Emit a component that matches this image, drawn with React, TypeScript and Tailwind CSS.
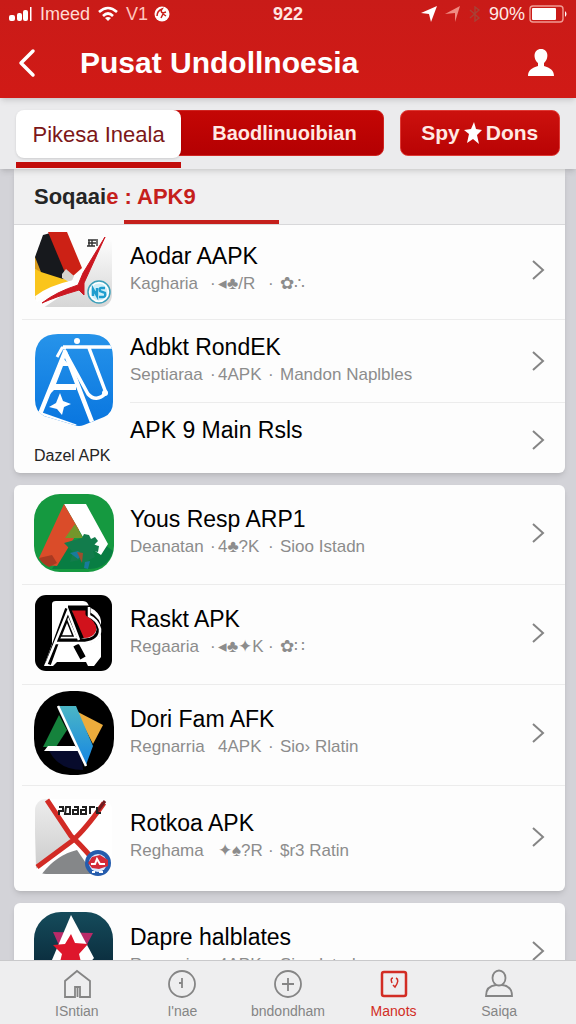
import React from "react";

type AppEntry = {
  title: string;
  publisher: string;
  format: string;
  extra: string;
  icon: React.ReactNode;
  dots: [boolean, boolean];
};

const WingIcon = () => (
  <svg viewBox="0 0 80 80" className="size-20" aria-hidden="true">
    <defs>
      <clipPath id="wing"><rect x="1" y="2" width="77" height="75" rx="12" /></clipPath>
      <linearGradient id="wingBg" x1="0" y1="0" x2="0" y2="1">
        <stop offset="0" stopColor="#fff" /><stop offset="1" stopColor="#d4d4d4" />
      </linearGradient>
    </defs>
    <g clipPath="url(#wing)">
      <rect width="80" height="80" fill="#fdfdfd" />
      <path d="M48 52 70 8 80 5V80H6Z" fill="url(#wingBg)" />
      <path d="M1 39 28 46 36 53 1 70Z" fill="#fac51c" />
      <path d="M1 27 9 5 20 2 36 47 29 49 7 42 1 36Z" fill="#17191d" />
      <path d="M1 27 7 42 1 39Z" fill="#d99b1b" />
      <path d="M14 2h19l15 36-9 8-7-1Z" fill="#cc2115" />
      <path d="m28 44 4-5 8 7-3 7-9-5Z" fill="#d6d3ce" />
      <path d="M1 70Q14 59 40 53" fill="none" stroke="#fff" strokeWidth="6" />
    </g>
    <path d="M71 7 49 43l-5 12Q22 62 8 73 21 67 45 60l5 5V53Z" fill="#cb1721" stroke="#cb1721" strokeLinejoin="round" />
    <path d="M54 10h8M55 10v6m3-6v6m-5 0h8m2-7v7m-9-3h8" stroke="#303030" strokeWidth="1.4" fill="none" />
    <circle cx="65" cy="62" r="11" fill="#fff" stroke="#3b9fb9" strokeWidth="1.5" />
    <circle cx="65" cy="62" r="8.5" fill="#cfeff8" />
    <path d="M59 66v-7l4 7v-8m8 0h-4q-2 0-1 3l5 2q1 4-2 4h-4" fill="none" stroke="#1e9dce" strokeWidth="2.4" />
  </svg>
);

const ShieldIcon = () => (
  <svg viewBox="0 0 80 96" className="h-24 w-20" aria-hidden="true">
    <defs>
      <clipPath id="shield"><path d="M24 2h31q24 0 24 24v44q0 11-9 15l-20 8q-5 2-10 0L10 84Q1 79 1 68V26Q1 2 24 2Z" /></clipPath>
      <linearGradient id="shieldBg" x1="0" y1="0" x2="0" y2="1">
        <stop stopColor="#2794ea" /><stop offset="1" stopColor="#0875df" />
      </linearGradient>
    </defs>
    <g clipPath="url(#shield)">
      <path d="M0 0h80v96H0Z" fill="url(#shieldBg)" />
      <path d="M6 82 31 20l27 70" fill="none" stroke="#fff" strokeWidth="4.5" strokeLinejoin="round" />
      <path d="M13 65 29 26l7 8H29l-7 18h20v6H20Z" fill="#fff" />
      <path d="M29 15h51M30 18l24 44q8 9 18-1L55 16" fill="none" stroke="#fff" strokeWidth="3.5" strokeLinejoin="round" />
      <path d="M32 16h-4l-5 9" fill="none" stroke="#fff" strokeWidth="3" />
      <circle cx="43" cy="9" r="3" fill="#fff" />
      <path d="m2 80 40 14" fill="none" stroke="#fff" strokeWidth="3" />
      <path d="m26 61 3 8 8 3-7 3-2 8-5-6-8-2 7-4Z" fill="#fff" />
    </g>
    <circle cx="71" cy="61" r="3" fill="#fff" />
  </svg>
);

const GardenIcon = () => (
  <svg viewBox="0 0 80 80" className="size-20" aria-hidden="true">
    <rect y="1" width="80" height="78" rx="26" fill="#159940" />
    <path d="M18 76h38q18-1 23-18L63 46 35 50Z" fill="#087d43" />
    <path d="M30 11h22l22 40-7 11-6-4 2-5-14-9Z" fill="#fff" />
    <path d="m30 11 15 26-22 36Q12 73 5 65Z" fill="#da4c29" />
    <path d="m5 65 13-3 5 8-8 4Q8 71 5 65Z" fill="#a93a22" />
    <path d="m41 31 8 14H31Z" fill="#73962b" />
    <path d="m48 45 2-4 5 1 2 4 4-2 3 4-4 4 5 1-1 6-5-1 2 6-6 3-2 6-7-6-10 2 3-10-9-9Z" fill="#127c4c" />
    <path d="m36 60 8-2 4 4-4 4Zm15 9 5-1-2 8-4-1Z" fill="#187b9c" />
    <path d="m43 59 6 1-1 10Z" fill="#9e4e2e" />
  </svg>
);

const FrameIcon = () => (
  <svg viewBox="0 0 80 80" className="size-20" aria-hidden="true">
    <rect x="1" y="2" width="77" height="76" rx="11" fill="#000" />
    <path d="M18 11q0-3 4-3h27q5 0 6 6 11 5 12 14v36l-7 9h-6l-2-4H23l-4 4h-9l8-22Z" fill="#fff" />
    <path d="M37 15h17l-1 6q11 9 9 17-3 8-15 7Z" fill="#d1121c" />
    <path d="M34 15h20v6q11 6 11 16-1 10-14 11H21" fill="none" stroke="#000" strokeWidth="5" strokeLinejoin="round" />
    <path d="M34 16 14 71M34 16l13 30M42 52l7 13" fill="none" stroke="#000" strokeWidth="6" />
    <path d="M12 72 34 18l11 29M20 50h31q16-2 15-14-2-9-11-13v-9" fill="none" stroke="#fff" strokeWidth="2.5" />
    <path d="m27 43 6-15 6 15Z" fill="#fff" stroke="#000" strokeWidth="1.5" />
  </svg>
);

const PrismIcon = () => (
  <svg viewBox="0 0 80 86" className="h-[86px] w-20" aria-hidden="true">
    <defs><linearGradient id="prism" x2="0" y2="1"><stop stopColor="#4bb6c5" /><stop offset="1" stopColor="#1686e3" /></linearGradient></defs>
    <rect y="1" width="80" height="84" rx="36" fill="#000" />
    <path d="M13 56h34l2 24Q22 80 13 56Z" fill="#070b2c" />
    <path d="m25 25 8 15-11 17H9Z" fill="#15823c" />
    <path d="m42 21 27 14-10 19Z" fill="#ecac3c" />
    <path d="M24 16h18l17 40-7 19Z" fill="url(#prism)" />
    <path d="m24 16 28 60" stroke="#fff" strokeWidth="2.5" fill="none" />
    <path d="m10 61 4-5h27l4 5Z" fill="#fff" />
  </svg>
);

const CrossIcon = () => (
  <svg viewBox="0 0 80 80" className="size-20" aria-hidden="true">
    <defs>
      <clipPath id="cross"><rect x="1" y="2" width="77" height="75" rx="11" /></clipPath>
      <linearGradient id="crossBg" x2="0" y2="1"><stop stopColor="#eee" /><stop offset="1" stopColor="#ccc" /></linearGradient>
    </defs>
    <g clipPath="url(#cross)">
      <path d="M0 0h80v80H0Z" fill="#fff" />
      <path d="M0 0h14l24 42L2 72Z" fill="url(#crossBg)" />
      <path d="M7 78Q22 58 43 53L60 78Z" fill="#858789" />
    </g>
    <path d="M13 3 37 39q8 7 21 22M70 6Q51 33 38 44L3 70" fill="none" stroke="#d22b25" strokeWidth="5" />
    <path d="m62 16 9-12" stroke="#701c20" strokeWidth="3" />
    <path d="M25 10h4v4h-4v4m7-8h4v7h-5Zm8 0h4v7h-5v-4h5m4-3h4v7h-5v-4h5m4 4v-7h5m2 0v6h4" fill="none" stroke="#202020" strokeWidth="2" />
    <circle cx="64" cy="66" r="13" fill="#255cad" />
    <circle cx="64" cy="66" r="9" fill="#dae9ff" />
    <path d="m54 66 4-6 8-2 8 5v6l-9 3-7-1Z" fill="#d42a38" />
    <path d="M57 67h4l2-5 3 5h5M58 75h3m4 0h4" stroke="#fff" strokeWidth="2" fill="none" />
  </svg>
);

const StarIcon = () => (
  <svg viewBox="0 0 80 80" className="size-20" aria-hidden="true">
    <defs><linearGradient id="starBg" x2="0" y2="1"><stop stopColor="#154b5b" /><stop offset="1" stopColor="#061f30" /></linearGradient></defs>
    <rect y="1" width="79" height="78" rx="27" fill="url(#starBg)" />
    <path d="m19 21 40 1-10 19H28Z" fill="#b92a68" />
    <path d="m37 4 23 43-8 9H15Z" fill="#fff" />
    <path d="m37 23 4 9 13 1-9 10 4 16-12-9-13 9 4-16-9-9 12-1Z" fill="#de162c" />
  </svg>
);

const Chevron = () => (
  <svg viewBox="0 0 14 22" className="h-[22px] w-3.5 shrink-0" fill="none" stroke="#858585" strokeWidth="2" aria-hidden="true">
    <path d="m2 2 10 9-10 9" />
  </svg>
);

function Entry({ title, publisher, format, extra, dots }: Omit<AppEntry, "icon">) {
  return (
    <div className="min-w-0 flex-1">
      <h2 className="whitespace-nowrap text-[23px] leading-7 text-black">{title}</h2>
      <p className="flex whitespace-nowrap text-[17px] leading-7 text-[#8c8c8c]">
        <span className="w-20 shrink-0">{publisher}</span>
        <span className="flex w-[70px] shrink-0"><span className="w-2">{dots[0] ? "·" : ""}</span><span className="flex-1">{format}</span><span className="w-3">{dots[1] ? "·" : ""}</span></span>
        <span>{extra}</span>
      </p>
    </div>
  );
}

function AppRow({ entry, className }: { entry: AppEntry; className: string }) {
  return (
    <li className="ml-2 border-b border-[#ececec] last:border-b-0">
      <a href="#" className={"flex items-center pl-3 pr-5 " + className}>
        <span className="w-24 shrink-0">{entry.icon}</span>
        <Entry {...entry} />
        <Chevron />
      </a>
    </li>
  );
}

const popular: AppEntry[] = [
  { title: "Yous Resp ARP1", publisher: "Deanatan", format: "4♣?K", extra: "Sioo Istadn", dots: [true, true], icon: <GardenIcon /> },
  { title: "Raskt APK", publisher: "Regaaria", format: "◂♣✦K", extra: "✿∷", dots: [true, true], icon: <FrameIcon /> },
  { title: "Dori Fam AFK", publisher: "Regnarria", format: "4APK", extra: "Sio› Rlatin", dots: [false, true], icon: <PrismIcon /> },
  { title: "Rotkoa APK", publisher: "Reghama", format: "✦♠?R", extra: "$r3 Ratin", dots: [false, true], icon: <CrossIcon /> },
];
const rowHeights = ["h-[99px] pb-1", "h-[99px] pb-1", "h-[100px] pb-1", "h-[105px] pb-1"];

function StatusBar() {
  return (
    <div className="flex h-7 items-center px-2 text-[18px] leading-6">
      <div className="flex flex-1 items-center gap-2">
        <svg viewBox="0 0 24 16" className="h-4 w-6" fill="#fff" aria-hidden="true"><rect x="1" y="9" width="6" height="6" rx="2" /><rect x="9" y="7" width="5" height="8" rx="2" /><rect x="15" y="4" width="5" height="11" rx="2" /><rect x="22" y="1" width="1.5" height="14" /></svg>
        <span className="text-[#ffd9d2]">Imeed</span>
        <svg viewBox="0 0 20 16" className="h-4 w-5" fill="none" stroke="#fff" strokeWidth="2.6" aria-hidden="true"><path d="M1 6q9-8 18 0M5 10q5-5 10 0" /><path d="m10 15-3-3q3-2 6 0Z" fill="#fff" stroke="none" /></svg>
        <span className="w-5 text-[#ffc6bd]">V1</span>
        <svg viewBox="0 0 16 16" className="size-4" aria-hidden="true"><circle cx="8" cy="8" r="7.5" fill="#fff" /><path d="M3 10q0-5 5-7-2 3 1 4l3-1M7 12l2-4 3 2" fill="none" stroke="#c91e19" strokeWidth="1.5" /></svg>
      </div>
      <span className="font-bold text-[#ffe6e1]">922</span>
      <div className="flex flex-1 items-center justify-end gap-2">
        <svg viewBox="0 0 16 16" className="size-4" fill="#fff" aria-hidden="true"><path d="M0 7 16 0 10 16 8 8Z" /></svg>
        <svg viewBox="0 0 16 16" className="size-4" fill="#f08c83" aria-hidden="true"><path d="m0 8 15-8-5 16V7Z" /></svg>
        <svg viewBox="0 0 12 16" className="h-4 w-3" fill="none" stroke="#a84136" strokeWidth="1.4" aria-hidden="true"><path d="m1 4 9 8-4 3V1l4 3-9 8" /></svg>
        <span className="text-[#ffeae7]">90%</span>
        <svg viewBox="0 0 39 18" className="-ml-1 h-[18px] w-[39px]" aria-hidden="true"><rect x="1" y="1" width="33" height="16" rx="3" fill="none" stroke="#f19c94" strokeWidth="1.4" /><rect x="3" y="3" width="24" height="12" rx="1" fill="#fff" /><path d="M36 6q3 3 0 6Z" fill="#fff" /></svg>
      </div>
    </div>
  );
}

const navItems = [
  { label: "ISntian", paths: <><path d="M3 28V12L15 2l13 10v16H18V18h-5v10H3Z" /><path d="M15.5 18v10" /></> },
  { label: "I'nae", paths: <><circle cx="15" cy="15" r="13" /><path d="M15 9v10M12 14h3" /></> },
  { label: "bndondham", paths: <><circle cx="15" cy="15" r="13" /><path d="M15 9v13M9 15h12" /></> },
  { label: "Manots", active: true, paths: <><rect x="3" y="3" width="24" height="24" rx="2" strokeWidth="2.5" /><path d="M13 14q-2-5 1-5m3 0q4 2-1 9l-2-2" strokeWidth="1.5" /></> },
  { label: "Saiqa", paths: <><ellipse cx="15" cy="9" rx="6.5" ry="7.5" /><path d="M12 16Q2 17 2 27h26q0-10-10-11" /></> },
];

export default function App() {
  return (
    <div className="flex h-screen flex-col overflow-hidden bg-[#d3d3d8] font-['Liberation_Sans',Arial,sans-serif]">
      <header className="relative z-20 shrink-0 bg-linear-to-b from-[#c91b18] to-[#d11a16] text-white shadow-md">
        <StatusBar />
        <div className="flex h-[70px] items-center pl-4 pr-5">
          <button type="button" aria-label="Kembali" className="w-16">
            <svg viewBox="0 0 22 30" className="h-[30px] w-[22px]" fill="none" stroke="#fff" strokeWidth="3.5" strokeLinecap="round" strokeLinejoin="round" aria-hidden="true"><path d="M17 3 5 15l12 12" /></svg>
          </button>
          <h1 className="flex-1 whitespace-nowrap text-[30px] font-bold leading-9">Pusat Undollnoesia</h1>
          <button type="button" aria-label="Profil">
            <svg viewBox="0 0 30 30" className="size-[30px]" fill="#fff" aria-hidden="true"><path d="M15 1c8 0 8 10 3 14v3c6 2 10 4 10 10H2c0-6 4-8 10-10v-3C7 11 7 1 15 1Z" /></svg>
          </button>
        </div>
      </header>

      <div className="relative z-10 flex h-[71px] shrink-0 items-start bg-[#ebebed] px-4 pt-3 shadow-md">
        <div className="relative z-10 flex flex-[170] flex-col gap-1">
          <button type="button" className="h-12 whitespace-nowrap rounded-lg bg-white text-[22px] text-[#7c1719] shadow-sm">Pikesa Ineala</button>
          <span className="h-1.5 bg-[#c20d0b]" />
        </div>
        <button type="button" className="-ml-2 h-[46px] flex-[202] whitespace-nowrap rounded-r-lg border border-[#cf2522] bg-linear-to-b from-[#c40705] to-[#b40002] pl-3 text-[20px] font-bold text-[#ffe9e4]">Baodlinuoibian</button>
        <button type="button" className="ml-4 flex h-[46px] flex-[163] items-center justify-center gap-1 whitespace-nowrap rounded-lg border border-[#df3a35] bg-linear-to-b from-[#cc110e] to-[#b90304] text-[21px] font-bold text-[#ffe9e4]">
          Spy
          <svg viewBox="0 0 18 22" className="h-[22px] w-[18px]" fill="#fff" aria-hidden="true"><path d="m10 0 2 7 6 1-5 5 2 9-6-5-6 4 2-9-5-4 7-1Z" /></svg>
          Dons
        </button>
      </div>

      <main className="min-h-0 flex-1 overflow-hidden pl-3.5 pr-[11px]">
        <section className="rounded-b-md bg-[#fdfdfd] shadow-md">
          <h2 className="flex h-14 border-b border-[#d8d8da] bg-[#f0f0f1] pl-5 text-[22px] font-bold leading-[56px] text-[#252525]">
            <span>Soqaai<span className="text-[#c5201c]">e</span></span>
            <span className="ml-1.5 w-[155px] whitespace-pre border-b-4 border-[#c5201c] text-[#c5201c]">: APK9</span>
          </h2>
          <ul>
            <AppRow
              className="h-[94px] pb-1"
              entry={{ title: "Aodar AAPK", publisher: "Kagharia", format: "◂♣/R", extra: "✿∴", dots: [true, true], icon: <WingIcon /> }}
            />
            <li className="flex pl-5">
              <div className="w-24 shrink-0 pt-3">
                <ShieldIcon />
                <p className="mt-4 whitespace-nowrap text-[16px] leading-6 text-[#252525]">Dazel APK</p>
              </div>
              <div className="flex-1">
                <a href="#" className="flex h-[83px] items-center border-b border-[#ececec] pr-5">
                  <Entry title="Adbkt RondEK" publisher="Septiaraa" format="4APK" extra="Mandon Naplbles" dots={[true, true]} />
                  <Chevron />
                </a>
                <a href="#" className="flex h-[70px] items-center justify-between pr-5 pt-1">
                  <h2 className="pb-5 text-[23px] leading-7 text-black">APK 9 Main Rsls</h2>
                  <Chevron />
                </a>
              </div>
            </li>
          </ul>
        </section>

        <section className="mt-3 rounded-md bg-[#fdfdfd] shadow-md">
          <ul>
            {popular.map((entry, i) => <AppRow key={entry.title} entry={entry} className={rowHeights[i]} />)}
          </ul>
        </section>

        <section className="mt-3 rounded-md bg-[#fdfdfd] shadow-md">
          <ul>
            <AppRow className="h-24" entry={{ title: "Dapre halblates", publisher: "Regaaria", format: "4APK", extra: "Sioo Istadn", dots: [true, true], icon: <StarIcon /> }} />
          </ul>
        </section>
      </main>

      <nav className="relative z-10 flex h-16 shrink-0 border-t border-[#c9c9cb] bg-[#eeeeef] px-6 pt-2">
        {navItems.map((item) => (
          <a key={item.label} href="#" className={"flex flex-1 flex-col items-center text-[14px] leading-6 " + (item.active ? "text-[#d22d24]" : "text-[#858585]")}>
            <svg viewBox="0 0 30 30" className="size-[30px] shrink-0" fill="none" stroke="currentColor" strokeWidth="1.8" aria-hidden="true">{item.paths}</svg>
            {item.label}
          </a>
        ))}
      </nav>
    </div>
  );
}
